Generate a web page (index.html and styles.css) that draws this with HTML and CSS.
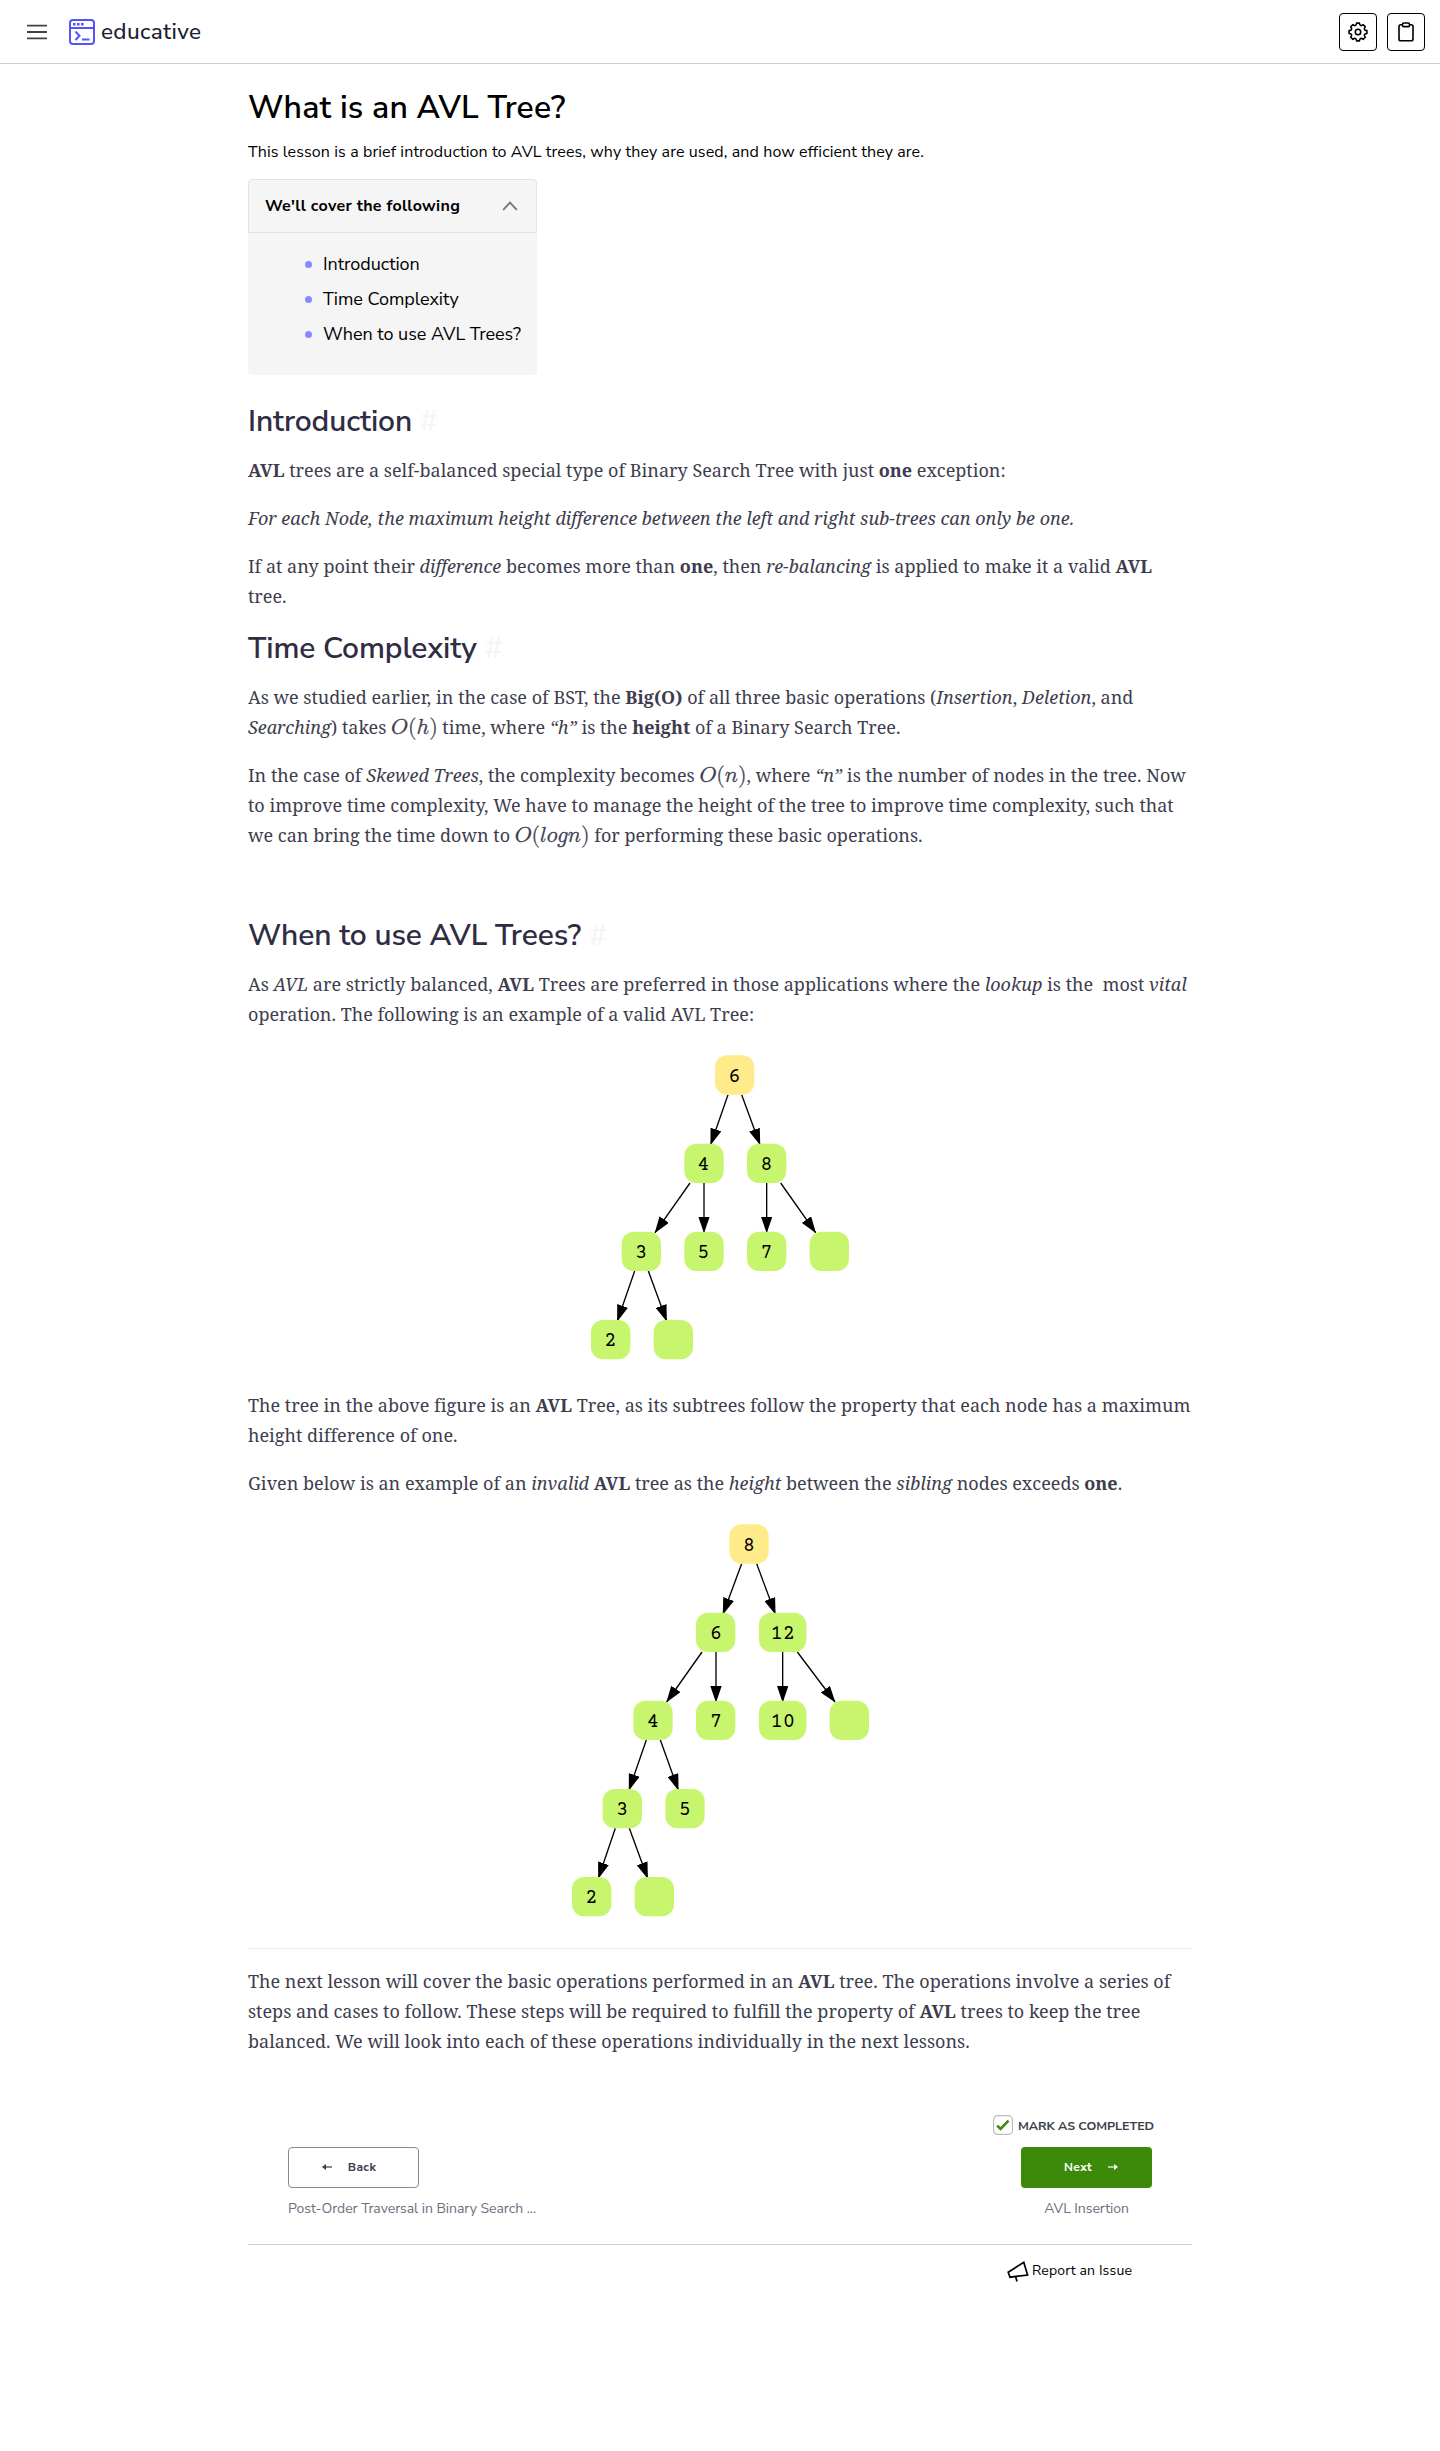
FILE: index.html
```html
<!DOCTYPE html>
<html lang="en">
<head>
<meta charset="utf-8">
<title>What is an AVL Tree?</title>
<link rel="stylesheet" href="styles.css">
</head>
<body>
<header class="topbar">
  <div class="topbar-group">
    <svg width="20" height="16" viewBox="0 0 20 16"><path d="M0 1.7h20M0 8h20M0 14.3h20" stroke="#424242" stroke-width="1.8"/></svg>
    <div class="brand">
      <svg width="26" height="26" viewBox="0 0 26 26" fill="none" stroke="#5553ff" stroke-width="2"><rect x="1" y="1" width="24" height="24" rx="3"/><path d="M1 9h24"/><path d="M4 5.2h2.6M8 5.2h2.6M12 5.2h2.6" stroke-width="2.6"/><path d="M6.5 12.5l4 4.2-4 4.3M13 20.5h7.5"/></svg>
      <span class="brand-name">educative</span>
    </div>
  </div>
  <div class="topbar-tools">
    <button class="tool" aria-label="Settings"><svg width="20" height="20" viewBox="-10 -10 20 20" fill="none" stroke="#000" stroke-width="1.6" stroke-linejoin="round"><path d="M8.9 1.4Q4.8 2 7.3 5.3L5.3 7.3Q2 4.8 1.4 8.9H-1.4Q-2 4.8-5.3 7.3L-7.3 5.3Q-4.8 2-8.9 1.4V-1.4Q-4.8-2-7.3-5.3L-5.3-7.3Q-2-4.8-1.4-8.9H1.4Q2-4.8 5.3-7.3L7.3-5.3Q4.8-2 8.9-1.4Z"/><circle r="2.7"/></svg></button>
    <button class="tool" aria-label="Notes"><svg width="16" height="20" viewBox="0 0 16 20" fill="none" stroke="#000" stroke-width="1.6"><rect x="1" y="2.8" width="14" height="16" rx="1.8"/><rect x="4.5" y="1" width="7" height="3.6" rx="1.2" fill="#fff"/></svg></button>
  </div>
</header>
<main class="lesson">
  <h1>What is an AVL Tree?</h1>
  <p class="summary">This lesson is a brief introduction to AVL trees, why they are used, and how efficient they are.</p>
  <nav class="toc">
    <div class="toc-head">We'll cover the following<svg width="16" height="10" viewBox="0 0 16 10" fill="none" stroke="#757575" stroke-width="1.8"><path d="M1.2 8.8L8 1.6l6.8 7.2"/></svg></div>
    <ul class="toc-list">
      <li>Introduction</li>
      <li>Time Complexity</li>
      <li>When to use AVL Trees?</li>
    </ul>
  </nav>
  <section class="intro">
    <h2>Introduction <a>#</a></h2>
    <p><b>AVL</b> trees are a self-balanced special type of Binary Search Tree with just <b>one</b> exception:</p>
    <p><i>For each Node, the maximum height difference between the left and right sub-trees can only be one.</i></p>
    <p>If at any point their <i>difference</i> becomes more than <b>one</b>, then <i>re-balancing</i> is applied to make it a valid <b>AVL</b><br>tree.</p>
  </section>
  <section class="time">
    <h2>Time Complexity <a>#</a></h2>
    <p>As we studied earlier, in the case of BST, the <b>Big(O)</b> of all three basic operations (<i>Insertion</i>, <i>Deletion</i>, and<br><i>Searching</i>) takes <span class="math"><math><mi>O</mi><mo stretchy="false" lspace="0" rspace="0">(</mo><mi>h</mi><mo stretchy="false" lspace="0" rspace="0">)</mo></math></span> time, where <i>“h”</i> is the <b>height</b> of a Binary Search Tree.</p>
    <p>In the case of <i>Skewed Trees</i>, the complexity becomes <span class="math"><math><mi>O</mi><mo stretchy="false" lspace="0" rspace="0">(</mo><mi>n</mi><mo stretchy="false" lspace="0" rspace="0">)</mo></math></span>, where <i>“n”</i> is the number of nodes in the tree. Now<br>to improve time complexity, We have to manage the height of the tree to improve time complexity, such that<br>we can bring the time down to <span class="math"><math><mi>O</mi><mo stretchy="false" lspace="0" rspace="0">(</mo><mi>l</mi><mi>o</mi><mi>g</mi><mi>n</mi><mo stretchy="false" lspace="0" rspace="0">)</mo></math></span> for performing these basic operations.</p>
  </section>
  <section class="usage">
    <h2>When to use AVL Trees? <a>#</a></h2>
    <p>As <i>AVL</i> are strictly balanced, <b>AVL</b> Trees are preferred in those applications where the <i>lookup</i> is the &nbsp;most <i>vital</i><br>operation. The following is an example of a valid AVL Tree:</p>
    <svg class="tree tree-valid" width="300" height="330" viewBox="0 0 900 990">
      <defs><marker id="tip" viewBox="0 0 50 34" refX="48" refY="17" markerWidth="50" markerHeight="34" markerUnits="userSpaceOnUse" orient="auto"><path d="M0 0L50 17L0 34Z"/></marker></defs>
      <g class="edges"><path d="M474 164L422 314"/><path d="M515 164L570 314"/><path d="M360 429L255 578"/><path d="M402 429V578"/><path d="M590 429V578"/><path d="M632 429L737 578"/><path d="M194 693L142 843"/><path d="M235 693L290 843"/></g>
      <rect class="root" x="435" y="46" width="118" height="118" rx="36"/>
      <g class="nodes"><rect x="343" y="311" width="118" height="118" rx="36"/><rect x="531" y="311" width="118" height="118" rx="36"/><rect x="155" y="575" width="118" height="118" rx="36"/><rect x="343" y="575" width="118" height="118" rx="36"/><rect x="531" y="575" width="118" height="118" rx="36"/><rect x="719" y="575" width="118" height="118" rx="36"/><rect x="63" y="840" width="118" height="118" rx="36"/><rect x="251" y="840" width="118" height="118" rx="36"/></g>
      <g class="keys"><text x="493" y="125">6</text><text x="400" y="389">4</text><text x="589" y="389">8</text><text x="213" y="653">3</text><text x="400" y="653">5</text><text x="589" y="653">7</text><text x="121" y="917">2</text></g>
    </svg>
    <p>The tree in the above figure is an <b>AVL</b> Tree, as its subtrees follow the property that each node has a maximum<br>height difference of one.</p>
    <p>Given below is an example of an <i>invalid</i> <b>AVL</b> tree as the <i>height</i> between the <i>sibling</i> nodes exceeds <b>one</b>.</p>
    <svg class="tree tree-invalid" width="340" height="420" viewBox="0 0 1020 1260">
      <g class="edges"><path d="M575 161L519 312"/><path d="M620 161L676 312"/><path d="M456 426L350 576"/><path d="M498 426V576"/><path d="M698 426V576"/><path d="M742 426L855 576"/><path d="M289 690L237 840"/><path d="M331 690L385 840"/><path d="M196 955L145 1105"/><path d="M238 955L293 1105"/></g>
      <rect class="root" x="538" y="43" width="118" height="118" rx="36"/>
      <g class="nodes"><rect x="438" y="308" width="118" height="118" rx="36"/><rect x="627" y="308" width="142" height="118" rx="36"/><rect x="250" y="572" width="118" height="118" rx="36"/><rect x="438" y="572" width="118" height="118" rx="36"/><rect x="627" y="572" width="142" height="118" rx="36"/><rect x="839" y="572" width="118" height="118" rx="36"/><rect x="158" y="837" width="118" height="118" rx="36"/><rect x="346" y="837" width="118" height="118" rx="36"/><rect x="66" y="1101" width="118" height="118" rx="36"/><rect x="254" y="1101" width="118" height="118" rx="36"/></g>
      <g class="keys"><text x="596" y="122">8</text><text x="497" y="386">6</text><text x="698" y="386">12</text><text x="308" y="650">4</text><text x="497" y="650">7</text><text x="698" y="650">10</text><text x="216" y="914">3</text><text x="404" y="914">5</text><text x="124" y="1178">2</text></g>
    </svg>
    <hr>
    <p>The next lesson will cover the basic operations performed in an <b>AVL</b> tree. The operations involve a series of<br>steps and cases to follow. These steps will be required to fulfill the property of <b>AVL</b> trees to keep the tree<br>balanced. We will look into each of these operations individually in the next lessons.</p>
  </section>
  <footer class="lesson-nav">
    <div class="mark"><svg width="20" height="20" viewBox="0 0 20 20" fill="none"><rect x=".6" y=".6" width="18.8" height="18.8" rx="4" stroke="#bdbdbd" stroke-width="1.2"/><path d="M4.2 10.6l3.3 3.3L15.5 5.6" stroke="#3d8a0b" stroke-width="2.6"/></svg>MARK AS COMPLETED</div>
    <div class="nav-row">
      <div class="nav-item"><button class="btn btn-back"><svg width="10" height="6" viewBox="0 0 10 6"><path d="M2 3h8" stroke="#3d3d4e" stroke-width="1.2"/><path d="M0 3l4-3v6z" fill="#3d3d4e"/></svg>Back</button><span class="caption">Post-Order Traversal in Binary Search ...</span></div>
      <div class="nav-item nav-next"><button class="btn btn-next">Next<svg width="10" height="6" viewBox="0 0 10 6"><path d="M0 3h8" stroke="#fff" stroke-width="1.2"/><path d="M10 3L6 0v6z" fill="#fff"/></svg></button><span class="caption">AVL Insertion</span></div>
    </div>
  </footer>
  <div class="report"><svg width="22" height="21" viewBox="0 0 22 21" fill="none" stroke="#000" stroke-width="1.7"><path d="M1.2 11.2L16.8 1.4L20.6 14L3 16.2Z"/><path d="M8.6 15.6L10 20.4"/></svg>Report an Issue</div>
</main>
</body>
</html>
```
FILE: styles.css
```css
* { box-sizing: border-box; }
body { margin: 0; background: #fff; color: #000; font-family: "Nunito Sans", Nunito, sans-serif; }
h1, h2, p, ul { margin: 0; padding: 0; }
svg { display: block; flex: none; }

.topbar { height: 64px; border-bottom: 1px solid #cfcfcf; display: flex; justify-content: space-between; align-items: center; padding: 0 15px 0 27px; }
.topbar-group, .brand, .topbar-tools { display: flex; align-items: center; }
.topbar-group { gap: 22px; }
.brand { gap: 6px; }
.topbar-tools { gap: 10px; }
.brand-name { font-size: 22.5px; line-height: 26px; font-weight: 500; letter-spacing: .35px; color: #1e1e32; }
.tool { width: 38px; height: 38px; border: 1px solid #000; border-radius: 4px; background: #fff; display: grid; place-items: center; padding: 0; }

.lesson { width: 944px; margin: 0 auto; padding-top: 22px; }
h1 { font-size: 32px; line-height: 44px; font-weight: 600; letter-spacing: .16px; }
.lesson .summary { font: 16px/24px "Nunito Sans", Nunito, sans-serif; letter-spacing: .115px; margin: 10px 0 15px; color: #000; }

.toc { width: 289px; height: 196px; background: #f5f5f5; border-radius: 4px; }
.toc-head { height: 54px; padding: 0 18px 0 16px; border: 1px solid #e2e2e2; border-radius: 4px 4px 0 0; display: flex; align-items: center; justify-content: space-between; font-weight: 700; font-size: 16px; letter-spacing: .32px; }
.toc-list { list-style: none; padding: 14px 0 0 57px; }
.toc-list li { font-size: 18px; line-height: 35px; display: flex; align-items: center; gap: 11px; letter-spacing: -.03px; white-space: nowrap; }
.toc-list li::before { content: ""; width: 7px; height: 7px; border-radius: 50%; background: #8b88ff; }

h2 { font-size: 30px; line-height: 40px; font-weight: 600; letter-spacing: -.12px; color: #2f2d44; padding-top: 1px; margin-bottom: 13px; }
h2 a { color: #f5f5f5; }
.intro { margin-top: 26px; }
.time { margin-top: 17px; }
.usage { margin-top: 65px; }

.lesson p { font: 18px/30px "Noto Serif", serif; letter-spacing: .007px; color: #3d3d4e; white-space: nowrap; }
.lesson p + p { margin-top: 18px; }
.math { display: inline-block; height: 20px; margin: -40px 0; }
.math math { font-family: "Latin Modern Math", "Liberation Serif", serif; font-size: 22px; letter-spacing: 0; -webkit-text-stroke: .3px #3d3d4e; }

.tree { margin: 0 auto; }
.tree-valid { margin-top: 11px; margin-bottom: 20px; }
.tree-invalid { margin-top: 12px; }
.edges path { fill: none; stroke: #000; stroke-width: 4; marker-end: url(#tip); }
.root { fill: #ffeb8a; }
.nodes { fill: #c8f56e; }
.keys { font: 62px "Courier Prime", "Liberation Mono", monospace; letter-spacing: -1px; text-anchor: middle; }

hr { border: 0; border-top: 1px solid #ececec; margin: 18px 0 17px; }

.lesson-nav { margin-top: 59px; padding: 0 40px; border-bottom: 1px solid #cfcfd6; height: 130px; }
.mark { display: flex; justify-content: flex-end; align-items: center; gap: 5px; height: 20px; margin-right: -2px; font-size: 12.5px; letter-spacing: -.06px; font-weight: 700; color: #3d3d4e; }
.nav-row { display: flex; justify-content: space-between; margin-top: 12px; }
.nav-item { display: flex; flex-direction: column; gap: 11px; }
.nav-next { align-items: center; }
.btn { width: 131px; height: 41px; border-radius: 4px; font: 700 12px "Nunito Sans", Nunito, sans-serif; letter-spacing: .4px; display: flex; align-items: center; justify-content: center; gap: 16px; padding: 0 9px 2px 0; }
.btn-back { border: 1px solid #8a899b; background: #fff; color: #3d3d4e; }
.btn-next { border: 0; background: #3d8a0b; color: #fff; padding: 0 0 2px 9px; }
.caption { font-size: 14px; line-height: 20px; letter-spacing: -.04px; color: #6f6d80; }
.report { display: flex; align-items: center; gap: 3px; margin: 15px 60px 0 0; justify-content: flex-end; font-size: 14px; line-height: 22px; letter-spacing: .15px; }
```
